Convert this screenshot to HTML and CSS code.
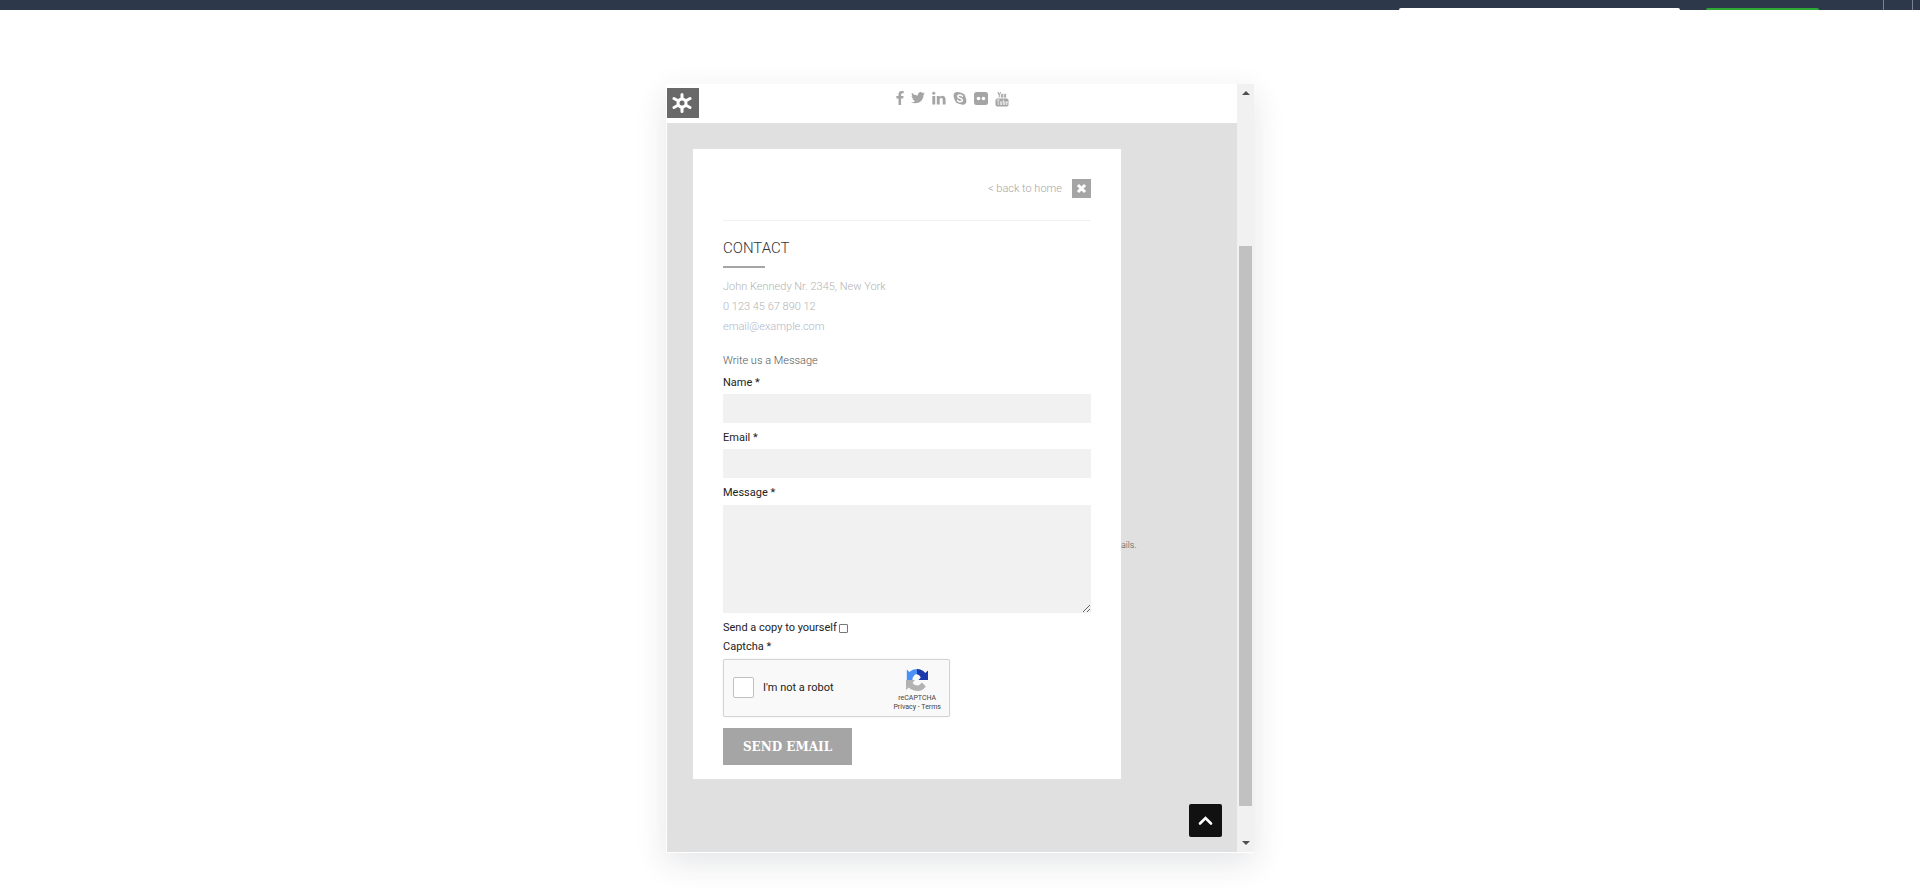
FILE: index.html
```
<!DOCTYPE html>
<html lang="en">
<head>
  <meta charset="UTF-8" />
  <meta name="viewport" content="width=device-width, initial-scale=1.0"/>
  <title>Contact</title>
  <link rel="stylesheet" href="styles.css">
</head>
<body>
  <header class="topbar">
    <div class="topbar-search"></div>
    <div class="topbar-action"></div>
    <div class="topbar-tools"></div>
  </header>

  <div class="preview">
    <div class="page">
      <div class="page-header">
        <button type="button" class="settings-btn" aria-label="Settings">
          <svg width="20" height="20" viewBox="0 0 20 20">
            <g stroke="#fff" stroke-width="3" stroke-linecap="round">
              <path d="M10 1.500v17M2 5.500l16 9M18 5.500l-16 9"/>
            </g>
            <circle cx="10" cy="10" r="5.500" fill="#fff"/>
            <circle cx="10" cy="10" r="2.500" fill="#696969"/>
          </svg>
        </button>
        <nav class="social">
          <a href="#" aria-label="Facebook"><svg width="8" height="14" viewBox="479 0 864 1664"><path d="M1343 12v264h-157q-86 0-116 36t-30 108v189h293l-39 296h-254v759h-306v-759h-255v-296h255v-218q0-186 104-288.500t277-102.500q147 0 228 12z"/></svg></a>
          <a href="#" aria-label="Twitter"><svg width="14" height="14" viewBox="100 128 1600 1600"><path d="M1684 408q-67 98-162 167 1 14 1 42 0 130-38 259.500t-115.500 248.500-184.500 210.500-258 146-323 54.500q-271 0-496-145 35 4 78 4 225 0 401-138-105-2-188-64.500t-114-159.500q33 5 61 5 43 0 85-11-112-23-185.500-111.500t-73.500-205.500v-4q68 38 146 41-66-44-105-115t-39-154q0-88 44-163 121 149 294.500 238.500t371.500 99.500q-8-38-8-74 0-134 94.500-228.500t228.500-94.500q140 0 236 102 109-21 205-78-37 115-142 178 93-10 186-50z"/></svg></a>
          <a href="#" aria-label="LinkedIn"><svg width="14" height="14" viewBox="110 60 1600 1600"><path d="M477 625v991h-330v-991h330zm21-306q1 73-50.500 122t-135.500 49h-2q-82 0-132-49t-50-122q0-74 51.500-122.500t134.500-48.500 133 48.500 51 122.500zm1166 729v568h-329v-530q0-105-40.500-164.500t-126.500-59.500q-63 0-105.500 34.500t-63.500 85.500q-11 30-11 81v553h-329q2-399 2-647t-1-296l-1-48h329v144h-2q20-32 41-56t56.500-52 87-43.500 114.500-15.500q171 0 275 113.500t104 332.500z"/></svg></a>
          <a href="#" aria-label="Skype"><svg width="14" height="14" viewBox="0 0 14 14"><circle cx="4.300" cy="4.700" r="3.700"/><circle cx="9.700" cy="10" r="3.700"/><circle cx="7" cy="7.300" r="5.700"/><path d="M9.300 5.300Q8.700 4 7 4 4.800 4 4.800 5.600 4.800 6.900 7 7.300 9.300 7.800 9.300 9.200 9.200 10.700 7 10.700 5 10.700 4.500 9.300" fill="none" stroke="#fff" stroke-width="1.500" stroke-linecap="round"/></svg></a>
          <a href="#" aria-label="Flickr"><svg width="14" height="14" viewBox="0 0 14 14"><rect y="1" width="14" height="13" rx="2.500"/><circle cx="4.500" cy="7.500" r="1.800" fill="#fff"/><circle cx="9.500" cy="7.500" r="1.800" fill="#fff"/></svg></a>
          <a href="#" aria-label="YouTube"><svg width="14" height="16" viewBox="0 0 14 16"><path d="M2.800 1l1.400 3v2.500M5.600 1L4.200 4M6.300 3.200h1.400v3H6.300zM9.300 2.800v3.400h1.400V2.800" fill="none" stroke="#a5a5a5" stroke-width="1"/><rect x=".5" y="7.500" width="13" height="8" rx="1.800"/><path d="M1.700 9h3M3.200 9v5M5.400 10.300v3.200h1.300v-3.200M8.300 8.500v5h1.300v-2.800H8.300M12.300 13.500h-1.200v-2.800h1.300v1.400h-1.300" fill="none" stroke="#fff" stroke-width=".7"/></svg></a>
        </nav>
      </div>

      <main class="stage">
        <section class="panel">
          <div class="panel-top">
            <a href="#" class="back-link">&lt; back to home</a>
            <button type="button" class="close-btn" aria-label="Close">
              <svg width="11" height="11" viewBox="0 0 11 11"><path d="M3 3l5 5M8 3l-5 5" stroke="#fff" stroke-width="3" stroke-linecap="square"/></svg>
            </button>
          </div>

          <h2>CONTACT</h2>
          <address class="details">
            John Kennedy Nr. 2345, New York<br />
            0 123 45 67 890 12<br />
            <a href="#">email@example.com</a>
          </address>

          <form class="contact-form">
            <p class="form-title">Write us a Message</p>
            <label for="name">Name *</label>
            <input type="text" id="name" class="field" />
            <label for="email">Email *</label>
            <input type="text" id="email" class="field" />
            <label for="message">Message *</label>
            <textarea id="message" class="field"></textarea>
            <div class="copy-row">
              <label for="copy">Send a copy to yourself</label>
              <input type="checkbox" id="copy" />
            </div>
            <div class="captcha-label">Captcha *</div>
            <div class="captcha">
              <input type="checkbox" id="robot" />
              <label for="robot">I'm not a robot</label>
              <div class="captcha-brand">
                <svg width="24" height="24" viewBox="0 0 24 24">
                  <path d="M12 1A11 11 0 0 0 4.300 4.100L1.800 1.600V12H7.500Q7 9.500 8.500 8.500Q9.500 5.800 12 6.300z" fill="#4a90f5"/>
                  <path d="M12 1A11 11 0 0 1 20.300 5L23 2.500V12H13.500L15.800 9.500Q14.500 6.500 12 6.300z" fill="#1c3aa9"/>
                  <path d="M1 12A11 11 0 0 0 20.800 18.500L17 14.500Q14.500 18 11 17.300Q8.500 16.700 7.600 14.700L10 12zM1 12v10l3-2.800z" fill="#b2b2b2"/>
                </svg>
                <span>reCAPTCHA</span>
                <span><a href="#">Privacy</a> - <a href="#">Terms</a></span>
              </div>
            </div>
            <button type="submit" class="send-btn">SEND EMAIL</button>
          </form>
        </section>
        <p class="stage-note">ails.</p>
        <button type="button" class="to-top" aria-label="Back to top">
          <svg width="15" height="11" viewBox="0 0 15 11"><path d="M2 8.500l5.500-5.500 5.500 5.500" fill="none" stroke="#fff" stroke-width="2.600" stroke-linecap="round"/></svg>
        </button>
      </main>
    </div>

    <div class="scrollbar">
      <span class="arrow arrow-up"></span>
      <div class="thumb"></div>
      <span class="arrow arrow-down"></span>
    </div>
  </div>
</body>
</html>
```

FILE: styles.css
```
* {
  box-sizing: border-box;
}
body {
  margin: 0;
  background: #fff;
  font-family: Roboto, 'Liberation Sans', sans-serif;
  font-size: 11px;
  color: #222;
}
button {
  border: none;
  padding: 0;
  cursor: pointer;
}
a {
  color: inherit;
  text-decoration: none;
}
p, h2 {
  margin: 0;
}
.topbar {
  display: flex;
  justify-content: flex-end;
  align-items: flex-end;
  height: 10px;
  background: #2e384b;
}
.topbar-search {
  width: 281px;
  height: 2px;
  margin-right: 26px;
  border-radius: 2px 2px 0 0;
  background: #fff;
}
.topbar-action {
  width: 113px;
  height: 2px;
  margin-right: 64px;
  border-radius: 2px 2px 0 0;
  background: #2fa836;
}
.topbar-tools {
  width: 30px;
  height: 10px;
  margin-right: 7px;
  border: solid #7d8491;
  border-width: 0 1px;
}
.preview {
  display: flex;
  max-width: 588px;
  margin: 74px auto 36px;
  padding: 0 0 1px 1px;
  background: #fff;
  box-shadow: 0 10px 30px rgba(30, 40, 60, 0.12);
}
.page {
  flex: 1;
}
.page-header {
  display: grid;
  grid-template-columns: 32px 1fr 32px;
  align-items: start;
  height: 39px;
  padding-top: 4px;
}
.settings-btn {
  display: flex;
  align-items: center;
  justify-content: center;
  width: 32px;
  height: 30px;
  padding-right: 2px;
  background: #696969;
}
.social {
  display: flex;
  justify-content: center;
  gap: 7px;
  padding-top: 3px;
}
.social svg {
  display: block;
  fill: #a5a5a5;
}
.stage {
  position: relative;
  display: flex;
  align-items: flex-start;
  padding: 26px 0 73px 26px;
  background: #e0e0e0;
}
.panel {
  width: 428px;
  padding: 30px 30px 14px;
  background: #fff;
}
.panel-top {
  display: flex;
  justify-content: flex-end;
  align-items: center;
  gap: 10px;
  padding-bottom: 22px;
  border-bottom: 1px solid #f1f1f1;
}
.back-link {
  font-size: 11px;
  font-weight: 300;
  color: #a5a5a5;
}
.close-btn {
  display: flex;
  align-items: center;
  justify-content: center;
  width: 19px;
  height: 19px;
  background: #a5a5a5;
}
h2 {
  padding-top: 17px;
  font-size: 15px;
  line-height: 20px;
  font-weight: 300;
  color: #333;
}
h2::after {
  content: '';
  display: block;
  width: 42px;
  height: 2px;
  margin-top: 8px;
  background: #a5a5a5;
}
.details {
  margin-top: 9px;
  font-family: 'Roboto Slab', Roboto, sans-serif;
  font-size: 11px;
  line-height: 20px;
  font-style: normal;
  font-weight: 300;
  color: #b4b4b4;
}
.details a {
  color: #b0b6cc;
}
.contact-form {
  display: flex;
  flex-direction: column;
  align-items: flex-start;
  margin-top: 15px;
}
.contact-form label, .captcha-label {
  line-height: 18px;
}
.form-title {
  margin-bottom: 4px;
  font-family: 'Roboto Slab', Roboto, sans-serif;
  font-size: 11px;
  line-height: 18px;
  font-weight: 300;
  color: #555;
}
.field {
  width: 100%;
  height: 29px;
  margin: 2px 0 6px;
  padding: 6px;
  border: none;
  border-radius: 0;
  background: #f1f1f1;
}
textarea.field {
  height: 108px;
  margin-top: 3px;
}
.copy-row {
  display: flex;
  align-items: center;
  gap: 2px;
}
.copy-row input {
  appearance: none;
  width: 9px;
  height: 9px;
  margin: 0;
  border: 1px solid #767676;
  border-radius: 1px;
  background: #fff;
}
.captcha-label {
  margin: 1px 0 3px;
}
.captcha {
  display: flex;
  align-items: center;
  width: 227px;
  height: 58px;
  padding: 0 8px 0 9px;
  border: 1px solid #d3d3d3;
  border-radius: 2px;
  background: #f9f9f9;
  box-shadow: 0 0 2px rgba(0, 0, 0, 0.08);
}
.captcha input {
  appearance: none;
  width: 21px;
  height: 21px;
  margin: 0 9px 2px 0;
  border: 1px solid #c1c1c1;
  border-radius: 2px;
  background: #fff;
}
.captcha-brand {
  display: flex;
  flex-direction: column;
  align-items: center;
  margin-left: auto;
  padding-top: 4px;
  font-size: 7px;
  line-height: 9px;
  color: #444;
}
.captcha-brand svg {
  margin-bottom: 2px;
}
.send-btn {
  width: 129px;
  height: 37px;
  margin-top: 11px;
  background: #a5a5a5;
  font-family: 'Roboto Slab', 'DejaVu Serif', serif;
  font-size: 12px;
  font-weight: 700;
  color: #fff;
}
.stage-note {
  padding-top: 390px;
  font-size: 9px;
  line-height: 12px;
  font-weight: 300;
  color: #555;
}
.to-top {
  position: absolute;
  right: 15px;
  bottom: 15px;
  display: flex;
  align-items: center;
  justify-content: center;
  width: 33px;
  height: 33px;
  border-radius: 2px;
  background: #111;
}
.scrollbar {
  display: flex;
  flex-direction: column;
  align-items: center;
  width: 17px;
  padding: 7px 0;
  background: #f1f1f1;
}
.arrow {
  border: solid transparent;
  border-width: 0 4px;
}
.arrow-up {
  border-bottom: 4px solid #505050;
}
.arrow-down {
  border-top: 4px solid #505050;
}
.thumb {
  flex: 1;
  width: 13px;
  margin: 151px 0 35px;
  background: #c1c1c1;
}
```
